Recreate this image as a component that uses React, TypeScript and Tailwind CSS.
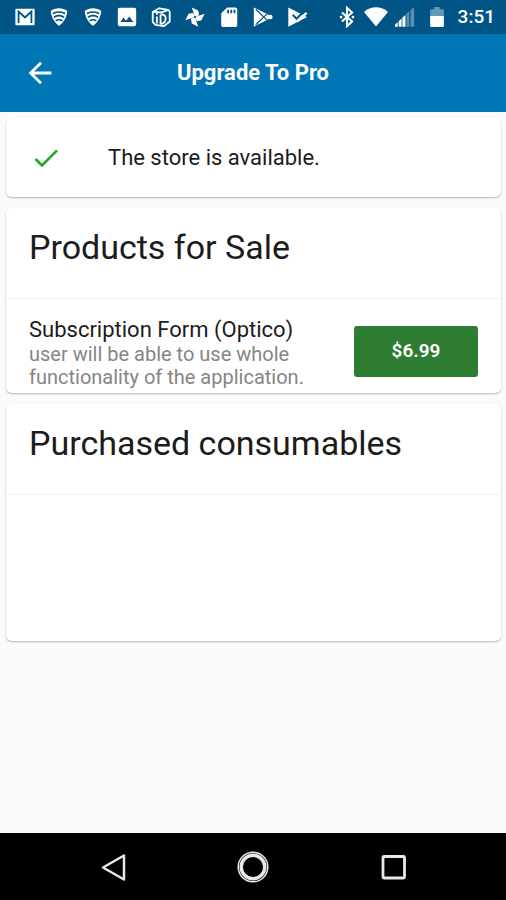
import type { ReactNode } from "react";

const Icon = ({
	children,
	className = "h-[22px] w-[22px]",
}: {
	children: ReactNode;
	className?: string;
}) => (
	<svg
		viewBox="0 0 24 24"
		fill="currentColor"
		aria-hidden="true"
		className={`shrink-0 ${className}`}
	>
		{children}
	</svg>
);

const MailIcon = () => (
	<Icon>
		<path d="M2.500 3h19a1 1 0 0 1 1 1v16a1 1 0 0 1-1 1h-19a1 1 0 0 1-1-1V4a1 1 0 0 1 1-1z" />
		<path
			d="M5 18.500V6l7 6.500L19 6v12.500"
			fill="none"
			stroke="#005486"
			strokeWidth="2"
		/>
	</Icon>
);

const WifiShieldIcon = () => (
	<Icon>
		<path d="M12 2.500c3.500 0 6.500 1 9 3-.4 7-4 12.500-9 16-5-3.500-8.600-9-9-16 2.500-2 5.500-3 9-3z" />
		<path
			d="M6 8c4-2 8-2 12 0M7 12c3-1.700 7-1.700 10 0M9 15.800c1.900-1 4.100-1 6 0"
			fill="none"
			stroke="#005486"
			strokeWidth="1.800"
			strokeLinecap="round"
		/>
	</Icon>
);

const ImageIcon = () => (
	<Icon>
		<path d="M22 20V4c0-1.100-.9-2-2-2H4c-1.100 0-2 .9-2 2v16c0 1.100.9 2 2 2h16c1.100 0 2-.9 2-2zM8 12.500l3 3.500 3.500-4.500 4.500 6H5l3-5z" />
	</Icon>
);

const CubeIcon = () => (
	<Icon>
		<path
			d="M3 6.500 10 2.500l10 1.800 1.500 2V17L15 22l-9-1.500-3-3z"
			fill="none"
			stroke="currentColor"
			strokeWidth="2"
			strokeLinejoin="round"
		/>
		<path
			d="M7.500 11.500V19M11.500 9.500v10.300M11.500 9.500c7-2 8 9 0 10.300M7.500 7.500v2M3.500 6.500l9 .5 7-2.500"
			fill="none"
			stroke="currentColor"
			strokeWidth="2"
		/>
	</Icon>
);

const PinwheelIcon = () => (
	<Icon>
		<path d="M12 12 8.500 1.500l7 3.500 1 5z" />
		<path d="M12 12 8.500 1.500l7 3.500 1 5z" transform="rotate(90 12 12)" />
		<path d="M12 12 8.500 1.500l7 3.500 1 5z" transform="rotate(180 12 12)" />
		<path d="M12 12 8.500 1.500l7 3.500 1 5z" transform="rotate(270 12 12)" />
		<circle cx="12" cy="12" r="1.200" fill="#005486" />
	</Icon>
);

const SdCardIcon = () => (
	<Icon>
		<path d="M19 1.500h-9L3.500 8v13c0 1.100.9 2 2 2H19c1.100 0 2-.9 2-2V3.500c0-1.100-.9-2-2-2zM12 8h-2V4h2v4zm3.500 0h-2V4h2v4zm3.500 0h-2V4h2v4z" />
	</Icon>
);

const PlayIcon = () => (
	<Icon>
		<path d="M2 1.500 17 9l5 3-5 3L2 22.500z" />
		<path
			d="M4 3.500 17 16M4 20.500 17 8"
			fill="none"
			stroke="#005486"
			strokeWidth="1.300"
		/>
		<circle cx="20" cy="12" r="2.500" />
	</Icon>
);

const PlayCheckIcon = () => (
	<Icon>
		<path d="M2.500 1.500 23 12 2.500 22.500z" />
		<path
			d="m7.500 9.500 4 4.500 9-9"
			fill="none"
			stroke="#005486"
			strokeWidth="2.200"
		/>
		<path
			d="m12 17 10.500-9.500"
			fill="none"
			stroke="currentColor"
			strokeWidth="2.500"
		/>
	</Icon>
);

const BluetoothIcon = () => (
	<Icon>
		<path
			d="m6.500 7 11 10-5.500 5V2l5.500 5-11 10"
			fill="none"
			stroke="currentColor"
			strokeWidth="2.300"
		/>
		<circle cx="5.500" cy="12" r="1.500" />
		<circle cx="18.500" cy="12" r="1.500" />
	</Icon>
);

const WifiIcon = () => (
	<Icon className="h-6 w-6">
		<path d="M12 21.500 0 7C6.500.8 17.500.8 24 7z" />
	</Icon>
);

const SignalIcon = () => (
	<Icon>
		<path d="M1 22.500v-2l3-2.800v4.800zM5 22.500v-6l3.300-2.800v8.800zM9.200 22.500V12.600l3.300-2.800v12.700z" />
		<path
			d="M13.600 22.500V8.600l3-2.800v16.700zM18 22.500V4.500L22 1v21.500z"
			opacity=".35"
		/>
	</Icon>
);

const BatteryIcon = () => (
	<Icon>
		<path
			d="M4.500 11V5c0-.8.600-1.500 1.500-1.500h3V1h6v2.500h3c.9 0 1.500.7 1.500 1.500v6z"
			opacity=".4"
		/>
		<path d="M4.500 11h15v10.500c0 .8-.6 1.500-1.500 1.500H6c-.9 0-1.500-.7-1.500-1.500z" />
	</Icon>
);

const StatusBar = () => (
	<div className="flex h-[34px] items-center bg-[#005486] pr-[11px] pl-[14px] text-white">
		<div className="flex items-center gap-3">
			<MailIcon />
			<WifiShieldIcon />
			<WifiShieldIcon />
			<ImageIcon />
			<CubeIcon />
			<PinwheelIcon />
			<SdCardIcon />
			<PlayIcon />
			<PlayCheckIcon />
		</div>
		<div className="ml-auto flex items-center gap-[6px]">
			<BluetoothIcon />
			<WifiIcon />
			<SignalIcon />
		</div>
		<div className="ml-[10px] flex items-center gap-[10px]">
			<BatteryIcon />
			<span className="text-[19px] leading-6 font-medium">3:51</span>
		</div>
	</div>
);

const AppBar = () => (
	<header className="grid h-[78px] grid-cols-[80px_1fr_80px] items-center bg-[#0077b5] text-white">
		<button type="button" aria-label="Back" className="flex justify-center">
			<Icon className="h-[34px] w-[34px]">
				<path d="M20 11H7.830l5.590-5.590L12 4l-8 8 8 8 1.410-1.410L7.830 13H20v-2z" />
			</Icon>
		</button>
		<h1 className="text-center text-[22px] leading-7 font-bold">
			Upgrade To Pro
		</h1>
	</header>
);

const Card = ({
	title,
	children,
}: {
	title?: string;
	children?: ReactNode;
}) => (
	<section className="rounded-md bg-white shadow-[0_1px_2px_rgba(0,0,0,0.28)]">
		{title ? (
			<h2 className="border-b border-[#f0f0f0] px-[23px] pt-[19px] pb-[31px] text-[34px] leading-10">
				{title}
			</h2>
		) : undefined}
		{children}
	</section>
);

const NavBar = () => (
	<nav className="flex h-[67px] items-center justify-center gap-[100px] bg-black text-[#e8e8e8]">
		<button type="button" aria-label="Back">
			<svg
				viewBox="0 0 40 40"
				className="h-10 w-10"
				fill="none"
				stroke="currentColor"
				strokeWidth="2.500"
				strokeLinejoin="round"
			>
				<path d="M31 8.500v24L10 20.500z" />
			</svg>
		</button>
		<button type="button" aria-label="Home">
			<svg
				viewBox="0 0 40 40"
				className="h-10 w-10"
				fill="none"
				stroke="currentColor"
			>
				<circle cx="20" cy="20" r="14.800" strokeWidth="1.500" />
				<circle cx="20" cy="20" r="11.800" strokeWidth="3.500" />
			</svg>
		</button>
		<button type="button" aria-label="Recent apps">
			<svg
				viewBox="0 0 40 40"
				className="h-10 w-10"
				fill="none"
				stroke="currentColor"
				strokeWidth="2.800"
			>
				<rect x="10" y="9.500" width="21.500" height="21.500" rx="1" />
			</svg>
		</button>
	</nav>
);

const App = () => {
	return (
		<div className="flex min-h-screen flex-col bg-[#fafafa] font-[Roboto,sans-serif] text-[#1c1c1c]">
			<StatusBar />
			<AppBar />
			<main className="flex flex-1 flex-col gap-[11px] px-[6px] pt-[6px] pr-[5px]">
				<Card>
					<div className="flex h-[79px] items-center pl-6">
						<Icon className="h-8 w-8 text-[#1faa2b]">
							<path d="M9 16.170 4.830 12l-1.420 1.410L9 19 21 7l-1.410-1.410z" />
						</Icon>
						<p className="ml-[46px] text-[22px] leading-7">
							The store is available.
						</p>
					</div>
				</Card>
				<Card title="Products for Sale">
					<div className="flex items-center justify-between gap-4 px-[23px] pt-[18px] pb-1">
						<div>
							<h3 className="text-[22px] leading-[26px]">
								Subscription Form (Optico)
							</h3>
							<p className="max-w-[290px] text-[20px] leading-[23px] text-[#858585]">
								user will be able to use whole functionality of the application.
							</p>
						</div>
						<button
							type="button"
							className="mb-1 h-[51px] w-[124px] shrink-0 rounded-[3px] bg-[#2e7d32] text-[19px] font-semibold text-white"
						>
							$6.99
						</button>
					</div>
				</Card>
				<Card title="Purchased consumables">
					<div className="h-[146px]" />
				</Card>
			</main>
			<NavBar />
		</div>
	);
};

export default App;
